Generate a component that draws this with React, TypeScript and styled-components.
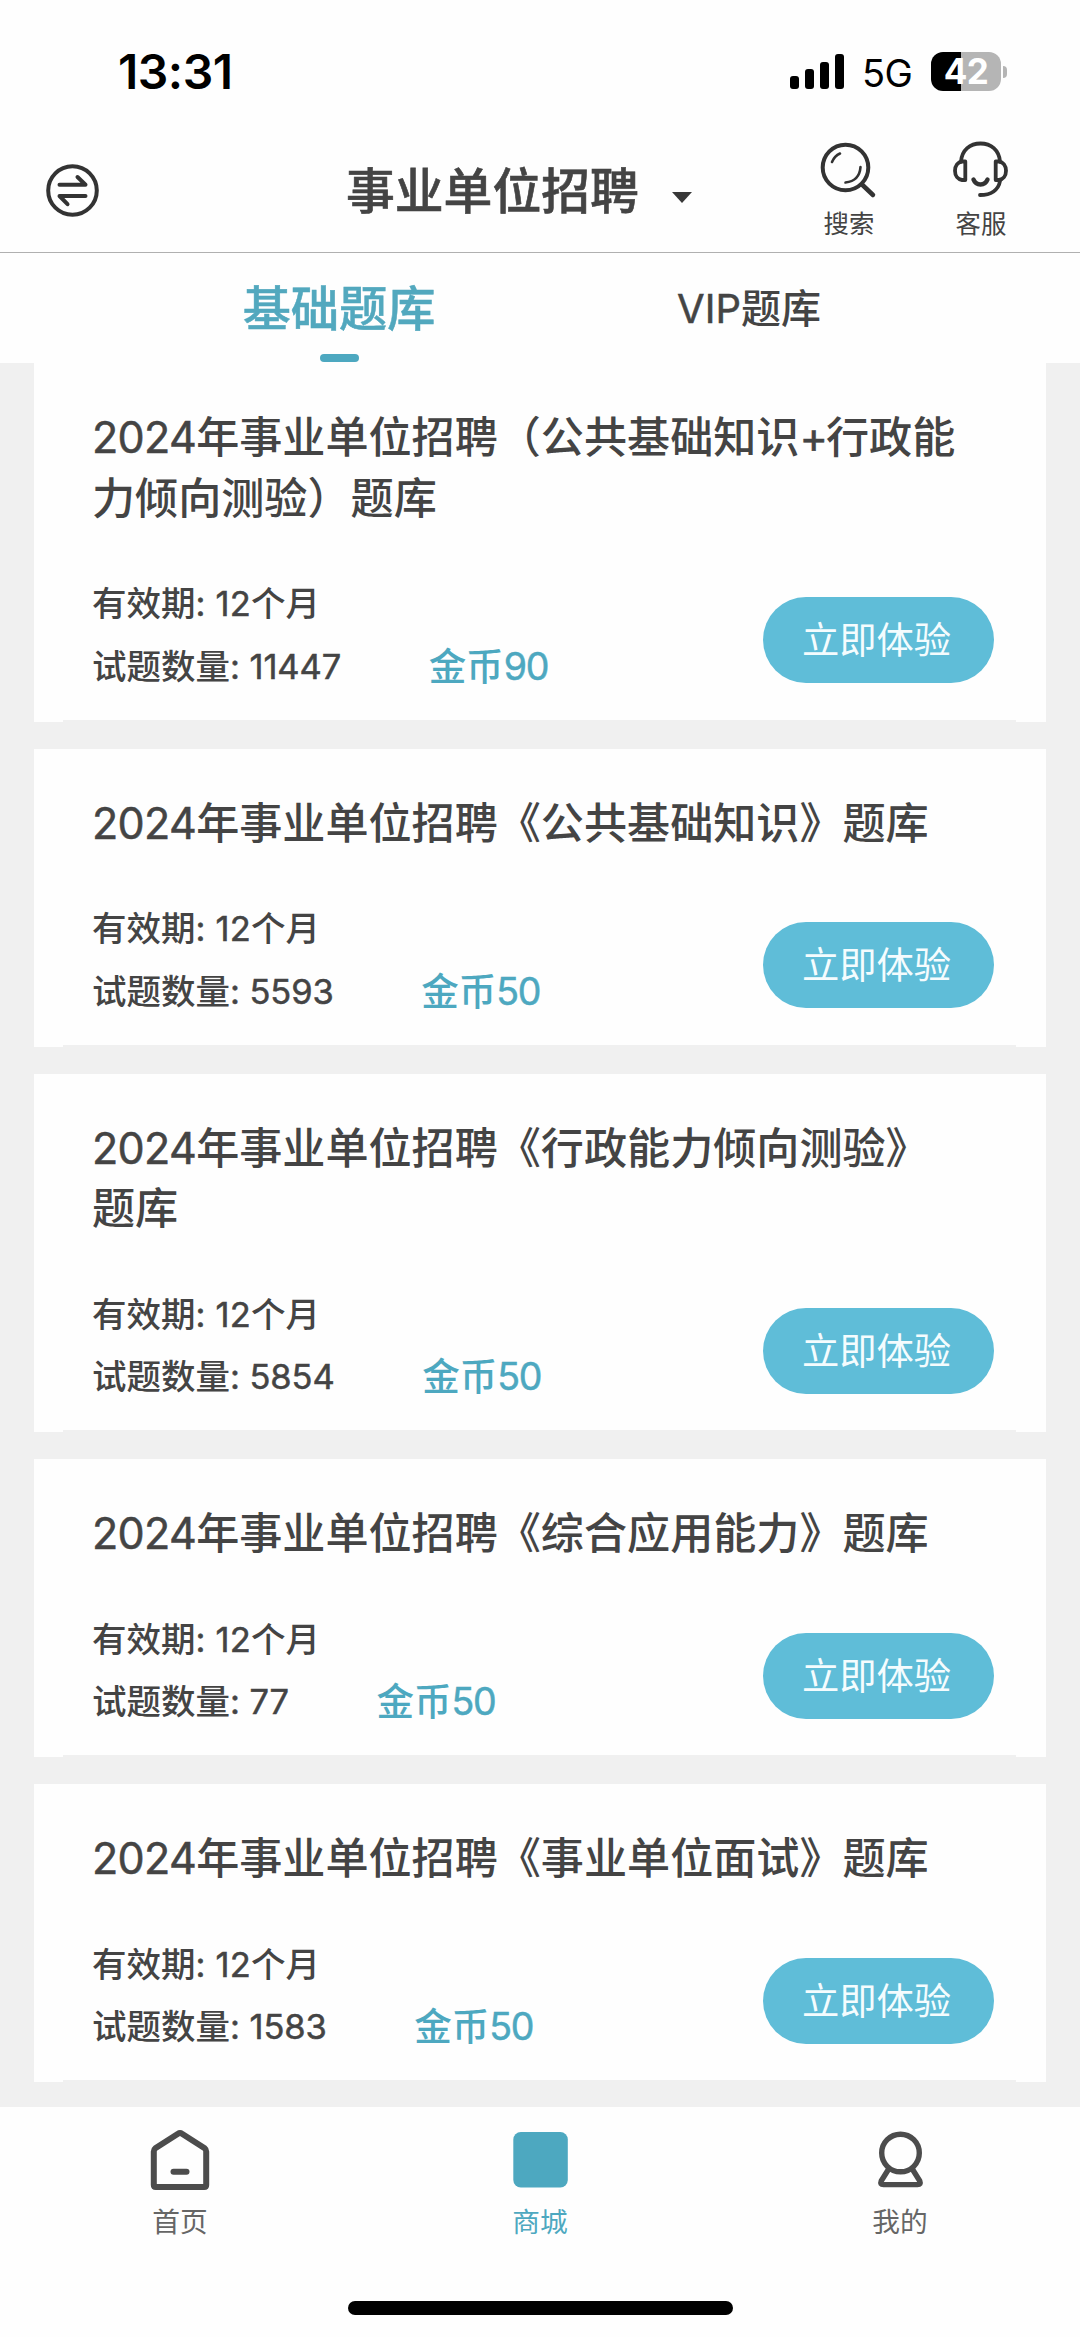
import React from "react";
import styled, { createGlobalStyle } from "styled-components";

const Global = createGlobalStyle`
  * { box-sizing: border-box; }
  html, body { margin: 0; padding: 0; background: #fff; }
  body { font-family: Inter, "Noto Sans CJK SC", sans-serif; color: #444; }
`;

const Screen = styled.div`
  width: 1080px;
  height: 2337px;
  display: flex;
  flex-direction: column;
  background: #fefefe;
  overflow: hidden;
`;

const StatusBar = styled.div`
  height: 120px;
  flex: none;
  display: flex;
  justify-content: space-between;
  padding: 0 73px 0 118px;
`;

const Clock = styled.div`
  color: #000;
  font-size: 48px;
  font-weight: 600;
  line-height: 58px;
  margin-top: 43px;
  letter-spacing: -0.5px;
`;

const StatusRight = styled.div`
  display: flex;
  align-items: flex-start;
  color: #000;
  padding-top: 52px;
`;

const Network = styled.span`
  width: 49px;
  font-size: 38px;
  line-height: 40px;
  margin: 1px 20px 0 18px;
  letter-spacing: -0.5px;
`;

const Battery = styled.div`
  width: 70px;
  height: 39px;
  border-radius: 12px;
  background: linear-gradient(90deg, #000 0 43%, #b5b5b5 43%);
  color: #fff;
  font-size: 35px;
  font-weight: 700;
  line-height: 39px;
  text-align: center;
  letter-spacing: -0.5px;
`;

const BatteryTip = styled.div`
  width: 4px;
  height: 12px;
  margin: 14px 0 0 2px;
  border-radius: 0 6px 6px 0;
  background: #b5b5b5;
`;

const Header = styled.header`
  height: 133px;
  flex: none;
  display: grid;
  grid-template-columns: 346px 1fr 132px 132px 33px;
  border-bottom: 1px solid #b0b0b0;
`;

const SwitchButton = styled.div`
  padding: 44px 0 0 45px;
`;

const HeaderTitle = styled.div`
  display: flex;
  align-items: flex-start;
  font-size: 48.8px;
  font-weight: 500;
  line-height: 60px;
  padding-top: 42px;
  -webkit-text-stroke: 0.6px #444;
`;

const Caret = styled.div`
  margin: 30px 0 0 33px;
  border: 10px solid transparent;
  border-top: 11px solid #383838;
  border-bottom: 0;
`;

const Action = styled.div`
  display: flex;
  flex-direction: column;
  align-items: center;
  font-size: 25.4px;
  line-height: 30px;
  padding-top: 19px;
  gap: 10px;
`;

const Tabs = styled.nav`
  height: 110px;
  flex: none;
  display: flex;
  padding: 0 125px 0 135px;
`;

const Tab = styled.div<{ $active?: boolean }>`
  width: ${(p) => (p.$active ? 408 : 412)}px;
  flex: none;
  display: flex;
  flex-direction: column;
  align-items: center;
  font-weight: 500;
  font-size: ${(p) => (p.$active ? 48.2 : 40)}px;
  line-height: 60px;
  padding-top: 26px;
  color: ${(p) => (p.$active ? "#52a8be" : "#444")};
  -webkit-text-stroke: ${(p) => (p.$active ? "0.5px #52a8be" : "0")};
`;

const Indicator = styled.div`
  width: 39px;
  height: 8px;
  margin-top: 15px;
  border-radius: 4px;
  background: #4da8c0;
`;

const List = styled.main`
  height: 1744px;
  flex: none;
  background: #f0f0f0;
  padding: 0 34px;
`;

const Card = styled.section`
  background: #fefefe;
  padding: 44px 52px 0 58px;
  margin-bottom: 27px;
`;

const CardTitle = styled.h2`
  margin: 0;
  font-size: 43.1px;
  font-weight: 500;
  line-height: 60.5px;
`;

const Latin = styled.span<{ $tracking?: number }>`
  font-weight: 400;
  -webkit-text-stroke: 0.5px currentColor;
  letter-spacing: ${(p) => p.$tracking ?? 0}px;
`;

const CardBody = styled.div`
  display: flex;
  justify-content: space-between;
  margin-top: 45px;
  height: 146.5px;
`;

const Info = styled.div`
  font-size: 34.5px;
  font-weight: 500;
  line-height: 62.6px;
`;

const CountRow = styled.div`
  display: flex;
  gap: 87.5px;
`;

const Price = styled.span`
  color: #4da8c0;
  font-size: 37.5px;
`;

const TryButton = styled.button`
  width: 231px;
  height: 86px;
  margin-top: 24px;
  border: 0;
  padding: 0 4px 0 0;
  border-radius: 43px;
  background: #5fbdd8;
  color: #f4fcfe;
  font: 400 37.3px/82px "Noto Sans CJK SC", sans-serif;
  display: flex;
  justify-content: center;
  align-items: flex-start;
`;

const CardEdge = styled.div`
  height: 2px;
  background: #f0f0f0;
  margin: 0 -22px 0 -29px;
`;

const BottomBar = styled.footer`
  flex: 1;
  display: grid;
  grid-template-columns: repeat(3, 360px);
  grid-template-rows: 194px 14px;
`;

const NavItem = styled.div<{ $active?: boolean }>`
  display: flex;
  flex-direction: column;
  align-items: center;
  padding-top: 20px;
  gap: 9px;
  font-size: 27.7px;
  line-height: 40px;
  color: ${(p) => (p.$active ? "#4da8c0" : "#666")};
`;

const HomeIndicator = styled.div`
  grid-column: 1 / 4;
  justify-self: center;
  width: 385px;
  height: 14px;
  border-radius: 7px;
  background: #000;
`;

const SignalIcon = () => (
  <svg width="54" height="39" viewBox="0 0 54 39">
    <rect x="0" y="24" width="9" height="13" rx="3" />
    <rect x="15" y="17" width="9" height="20" rx="3" />
    <rect x="30" y="10" width="9" height="27" rx="3" />
    <rect x="45" y="2" width="9" height="35" rx="3" />
  </svg>
);

const SwapIcon = () => (
  <svg width="54" height="54" viewBox="0 0 54 54" fill="none" stroke="#333" strokeWidth="4" strokeLinecap="round" strokeLinejoin="round">
    <circle cx="27.5" cy="26.5" r="24.3" />
    <path d="M14.500 20.700H40.500L32.500 13" />
    <path d="M40.500 32H14.500L22.500 40.200" />
  </svg>
);

const SearchIcon = () => (
  <svg width="58" height="60" viewBox="0 0 58 60" fill="none" stroke="#333" strokeWidth="4" strokeLinecap="round">
    <circle cx="25.5" cy="28.5" r="22.8" />
    <path d="M42 45.500l11 10.500" strokeWidth="4.500" />
    <path d="M12 23q2.500-6 8-8.500M40.500 28q-1 14-15 15.500" strokeWidth="2.600" />
  </svg>
);

const ServiceIcon = () => (
  <svg width="58" height="60" viewBox="0 0 58 60" fill="none" stroke="#333" strokeWidth="3.800" strokeLinecap="round" strokeLinejoin="round">
    <path d="M9 22.500C10 11 18 4.500 28.500 4.500S47 11 48 22.500" />
    <path d="M13.300 22.500v18.500H10C6 40.500 3 37 3 31.800S6 23 10 22.500z" />
    <path d="M43.700 22.500v18.500H47c4-.5 7-4 7-9.200s-3-8.800-7-9.300z" />
    <path d="M21.500 40.500c2.500 6.500 11.500 6.500 14 0" strokeWidth="4.500" />
    <path d="M48 42c-1.500 9-9 14-20 14" />
  </svg>
);

const HomeIcon = () => (
  <svg width="60" height="66" viewBox="0 0 60 66" fill="none" stroke="#4c4c4c" strokeWidth="6" strokeLinejoin="round" strokeLinecap="round">
    <path d="M3.800 24.500q0-2 1.500-3.200L28 6.700q2-1.400 4 0l22.700 14.600q1.500 1.200 1.500 3.200V58q0 2-2 2H5.800q-2 0-2-2z" />
    <path d="M23.500 44.700h13" />
  </svg>
);

const ShopIcon = () => (
  <svg width="60" height="66" viewBox="0 0 60 66">
    <rect x="3.3" y="5" width="54.5" height="55.5" rx="7.5" fill="#4da8c0" />
  </svg>
);

const UserIcon = () => (
  <svg width="60" height="66" viewBox="0 0 60 66" fill="none" stroke="#4c4c4c" strokeWidth="5.400" strokeLinejoin="round">
    <circle cx="30.5" cy="26" r="18.800" />
    <path d="M19 41.500l-7.800 12.500q-1.500 3.600 2.300 3.600h34q3.800 0 2.300-3.600L42 41.500" />
  </svg>
);

const banks = [
  { year: "2024", title: "年事业单位招聘（公共基础知识", plus: "+", tail: "行政能", rest: "力倾向测验）题库", count: "11447", price: "90" },
  { year: "2024", title: "年事业单位招聘《公共基础知识》题库", count: "5593", price: "50" },
  { year: "2024", title: "年事业单位招聘《行政能力倾向测验》", rest: "题库", count: "5854", price: "50" },
  { year: "2024", title: "年事业单位招聘《综合应用能力》题库", count: "77", price: "50" },
  { year: "2024", title: "年事业单位招聘《事业单位面试》题库", count: "1583", price: "50" },
];

export default function App() {
  return (
    <Screen>
      <Global />
      <StatusBar>
        <Clock>13:31</Clock>
        <StatusRight>
          <SignalIcon />
          <Network>5G</Network>
          <Battery>42</Battery>
          <BatteryTip />
        </StatusRight>
      </StatusBar>
      <Header>
        <SwitchButton><SwapIcon /></SwitchButton>
        <HeaderTitle>事业单位招聘<Caret /></HeaderTitle>
        <Action><SearchIcon />搜索</Action>
        <Action><ServiceIcon />客服</Action>
      </Header>
      <Tabs>
        <Tab $active>基础题库<Indicator /></Tab>
        <Tab><span><Latin>VIP</Latin>题库</span></Tab>
      </Tabs>
      <List>
        {banks.map((b) => (
          <Card key={b.count}>
            <CardTitle>
              <Latin $tracking={-0.7}>{b.year}</Latin>{b.title}
              {b.plus && <Latin $tracking={-2}>{b.plus}</Latin>}{b.tail}
              {b.rest && <div>{b.rest}</div>}
            </CardTitle>
            <CardBody>
              <Info>
                <div>有效期<Latin $tracking={0.2}>: 12</Latin>个月</div>
                <CountRow>
                  <span>试题数量<Latin $tracking={-0.1}>: {b.count}</Latin></span>
                  <Price>金币<Latin $tracking={-1.2}>{b.price}</Latin></Price>
                </CountRow>
              </Info>
              <TryButton>立即体验</TryButton>
            </CardBody>
            <CardEdge />
          </Card>
        ))}
      </List>
      <BottomBar>
        <NavItem><HomeIcon />首页</NavItem>
        <NavItem $active><ShopIcon />商城</NavItem>
        <NavItem><UserIcon />我的</NavItem>
        <HomeIndicator />
      </BottomBar>
    </Screen>
  );
}
